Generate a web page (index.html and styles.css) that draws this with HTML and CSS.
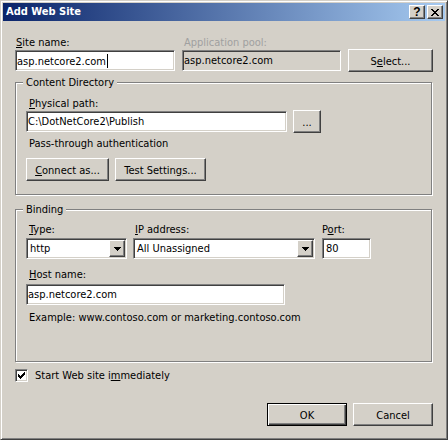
FILE: index.html
```html
<!DOCTYPE html>
<html lang="en">
<head>
<meta charset="utf-8">
<title>Add Web Site</title>
<link rel="stylesheet" href="styles.css">
</head>
<body>
<div class="window">
  <div class="titlebar">
    <span class="title">Add Web Site</span>
    <div class="caption-btns">
      <button class="cap-btn help">?</button>
      <button class="cap-btn close"><svg width="8" height="7" viewBox="0 0 8 7"><path d="M0 0h2v1H0z M6 0h2v1H6z M1 1h2v1H1z M5 1h2v1H5z M2 2h4v1H2z M3 3h2v1H3z M2 4h4v1H2z M1 5h2v1H1z M5 5h2v1H5z M0 6h2v1H0z M6 6h2v1H6z" fill="#000"/></svg></button>
    </div>
  </div>
  <div class="dialog-body">
    <div class="site-grid">
      <div class="lbl"><u>S</u>ite name:</div>
      <div class="lbl disabled">Application pool:</div>
      <div></div>
      <div class="field">asp.netcore2.com<span class="caret"></span></div>
      <div class="field readonly">asp.netcore2.com</div>
      <button class="btn select">S<u>e</u>lect...</button>
    </div>

    <fieldset class="group dir">
      <legend>Content Directory</legend>
      <div class="lbl gl"><u>P</u>hysical path:</div>
      <div class="path-row">
        <div class="field path">C:\DotNetCore2\Publish</div>
        <button class="btn browse">...</button>
      </div>
      <div class="note">Pass-through authentication</div>
      <div class="btn-row">
        <button class="btn connect"><u>C</u>onnect as...</button>
        <button class="btn test">Test Settin<u>g</u>s...</button>
      </div>
    </fieldset>

    <fieldset class="group binding">
      <legend>Binding</legend>
      <div class="binding-grid">
        <div class="lbl gl"><u>T</u>ype:</div>
        <div class="lbl ip-lbl"><u>I</u>P address:</div>
        <div class="lbl port-lbl">P<u>o</u>rt:</div>
        <div class="field combo"><span class="combo-text">http</span><span class="drop"><svg width="7" height="4" viewBox="0 0 7 4"><path d="M0 0h7v1H0z M1 1h5v1H1z M2 2h3v1H2z M3 3h1v1H3z" fill="#000"/></svg></span></div>
        <div class="field combo"><span class="combo-text">All Unassigned</span><span class="drop"><svg width="7" height="4" viewBox="0 0 7 4"><path d="M0 0h7v1H0z M1 1h5v1H1z M2 2h3v1H2z M3 3h1v1H3z" fill="#000"/></svg></span></div>
        <div class="field port">80</div>
      </div>
      <div class="lbl gl host-lbl"><u>H</u>ost name:</div>
      <div class="field host">asp.netcore2.com</div>
      <div class="note example">Example: www.contoso.com or marketing.contoso.com</div>
    </fieldset>

    <label class="check-row">
      <span class="checkbox"><svg width="11" height="11" viewBox="0 0 11 11"><path d="M2 4h1v3H2z M3 5h1v3H3z M4 6h1v3H4z M5 5h1v3H5z M6 4h1v3H6z M7 3h1v3H7z M8 2h1v3H8z" fill="#000"/></svg></span>
      <span>Start Web site i<u>m</u>mediately</span>
    </label>

    <div class="footer">
      <button class="btn default">OK</button>
      <button class="btn">Cancel</button>
    </div>
  </div>
</div>
</body>
</html>
```
FILE: styles.css
```css
* {
  box-sizing: border-box;
}

body {
  margin: 0;
  background: #d4d0c8;
  color: #000;
  font-family: "DejaVu Sans Condensed", "DejaVu Sans", sans-serif;
  font-stretch: condensed;
  font-size: 11px;
  line-height: 13px;
}

u {
  text-decoration-thickness: 1px;
  text-underline-offset: 1px;
}

.window {
  width: 448px;
  height: 440px;
  padding: 2px;
  background: #d4d0c8;
  border: 1px solid;
  border-color: #d4d0c8 #404040 #404040 #d4d0c8;
  box-shadow: inset 1px 1px 0 #fff, inset -1px -1px 0 #808080;
}

/* ---------- title bar ---------- */
.titlebar {
  height: 18px;
  display: flex;
  align-items: center;
  padding: 0 2px 0 3px;
  background: linear-gradient(to right, #0a246a, #a6caf0);
}

.title {
  flex: 1;
  color: #fff;
  font-weight: bold;
  line-height: 18px;
}

.caption-btns {
  display: flex;
  gap: 2px;
}

.cap-btn {
  width: 16px;
  height: 14px;
  margin: 0;
  padding: 0;
  display: flex;
  align-items: center;
  justify-content: center;
  background: #d4d0c8;
  border: 1px solid;
  border-color: #fff #404040 #404040 #fff;
  box-shadow: inset -1px -1px 0 #808080;
}

.help {
  font-family: "Liberation Sans", sans-serif;
  font-weight: bold;
  font-size: 12px;
  line-height: 12px;
  color: #000;
}

.close svg {
  display: block;
}

/* ---------- body ---------- */
.dialog-body {
  padding: 15px 12px 0;
}

.lbl {
  padding-left: 1px;
  white-space: nowrap;
}

.lbl.gl {
  padding-left: 3px;
}

.disabled {
  color: #a0a0a0;
}

.field {
  height: 21px;
  padding: 3px 1px 0;
  background: #fff;
  border: 1px solid;
  border-color: #808080 #fff #fff #808080;
  box-shadow: inset 1px 1px 0 #404040, inset -1px -1px 0 #d4d0c8;
  white-space: nowrap;
  overflow: hidden;
}

.field.readonly {
  background: #d4d0c8;
}

.caret {
  display: inline-block;
  width: 1px;
  height: 14px;
  margin-left: 1px;
  background: #000;
  vertical-align: -3px;
}

.btn {
  height: 23px;
  margin: 0;
  padding: 2px 0 0;
  font: inherit;
  color: #000;
  background: #d4d0c8;
  border: 1px solid;
  border-color: #fff #404040 #404040 #fff;
  box-shadow: inset -1px -1px 0 #808080;
  text-align: center;
  white-space: nowrap;
}

.btn.default {
  border-color: #000;
  box-shadow: inset 1px 1px 0 #fff, inset -1px -1px 0 #404040, inset -2px -2px 0 #808080;
}

.site-grid {
  display: grid;
  grid-template-columns: 160px 159px 85px;
  grid-template-rows: 13px 21px;
  column-gap: 7px;
  row-gap: 1px;
}

.site-grid .lbl.disabled {
  padding-left: 2px;
}

.select {
  margin: -1px 0;
}

/* ---------- group boxes ---------- */
.group {
  margin: 5px 1px 0 0;
  padding: 8px 10px 13px;
  border: 1px solid #808080;
  box-shadow: inset 1px 1px 0 #fff, 1px 1px 0 #fff;
  min-width: 0;
}

.group legend {
  margin-left: -3px;
  padding: 0 3px;
  background: #d4d0c8;
}

.path-row {
  display: flex;
  align-items: center;
  gap: 6px;
  margin-top: 1px;
}

.field.path {
  width: 261px;
}

.browse {
  width: 28px;
  margin: -1px 0;
}

.note {
  padding-left: 3px;
  margin-top: 5px;
}

.btn-row {
  display: flex;
  gap: 6px;
  margin-top: 8px;
}

.connect {
  width: 83px;
}

.test {
  width: 91px;
}

.binding {
  margin-top: 8px;
  padding-top: 7px;
  padding-bottom: 37px;
}

.binding-grid {
  display: grid;
  grid-template-columns: 101px 182px 50px;
  grid-template-rows: 13px 21px;
  column-gap: 6px;
  row-gap: 2px;
}

.binding-grid > :nth-child(3n) {
  margin-left: 1px;
}

.ip-lbl {
  padding-left: 2px;
}

.port-lbl {
  padding-left: 0;
}

.combo {
  display: flex;
  align-items: stretch;
  padding: 1px;
}

.combo-text {
  flex: 1;
  padding: 2px 0 0 2px;
}

.drop {
  width: 16px;
  display: flex;
  align-items: center;
  justify-content: center;
  background: #d4d0c8;
  border: 1px solid;
  border-color: #fff #404040 #404040 #fff;
  box-shadow: inset -1px -1px 0 #808080;
}

.drop svg {
  display: block;
}

.field.port {
  padding-left: 3px;
}

.host-lbl {
  margin-top: 9px;
}

.field.host {
  width: 259px;
  margin-top: 3px;
}

.example {
  margin-top: 6px;
}

/* ---------- checkbox & footer ---------- */
.check-row {
  display: flex;
  align-items: center;
  gap: 7px;
  margin-top: 7px;
}

.checkbox {
  width: 13px;
  height: 13px;
  padding: 0;
  background: #fff;
  border: 1px solid;
  border-color: #808080 #fff #fff #808080;
  box-shadow: inset 1px 1px 0 #404040, inset -1px -1px 0 #d4d0c8;
}

.checkbox svg {
  display: block;
}

.footer {
  display: flex;
  justify-content: flex-end;
  gap: 6px;
  margin-top: 21px;
}

.footer .btn {
  width: 80px;
}
```
